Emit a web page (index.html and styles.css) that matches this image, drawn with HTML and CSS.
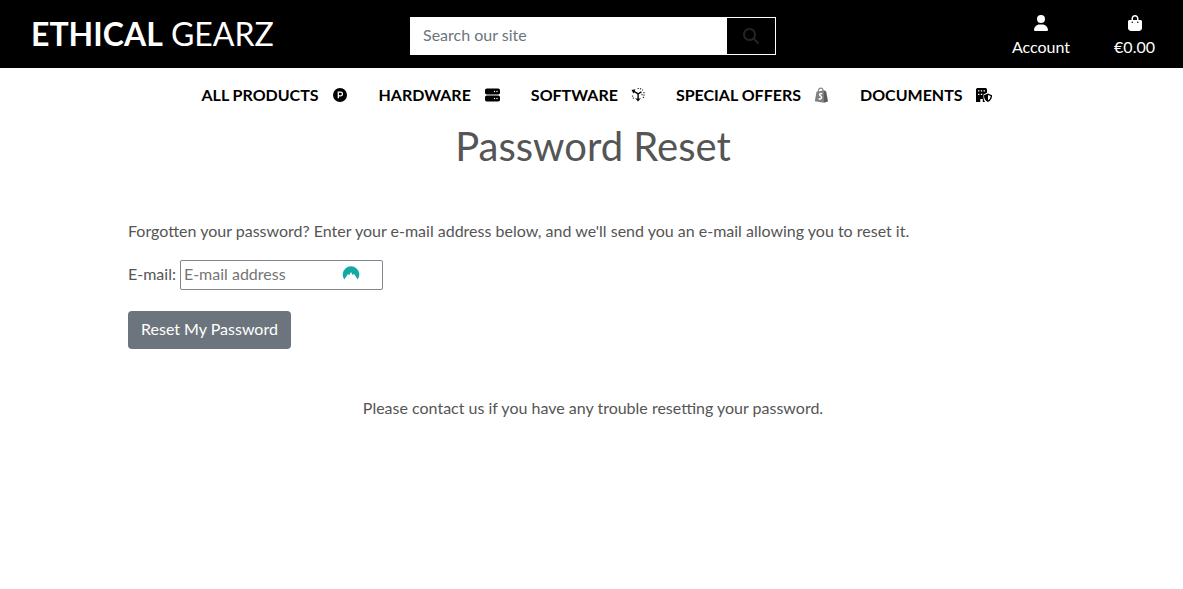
FILE: index.html
```html
<!DOCTYPE html>
<html lang="en">
<head>
<meta charset="utf-8">
<meta name="viewport" content="width=device-width, initial-scale=1">
<title>Password Reset | Ethical Gearz</title>
<link rel="stylesheet" href="styles.css">
</head>
<body>
<header class="top">
  <a class="brand" href="#"><strong>ETHICAL</strong> GEARZ</a>
  <form class="search">
    <input class="search-input" type="text" aria-label="Search our site" placeholder="Search our site">
    <button class="search-button" type="button" aria-label="Search">
      <svg width="16" height="16" viewBox="0 0 512 512" fill="currentColor"><path d="M416 208c0 45.9-14.9 88.3-40 122.7L502.6 457.4c12.5 12.5 12.5 32.8 0 45.3s-32.8 12.5-45.3 0L330.7 376c-34.4 25.2-76.8 40-122.7 40C93.1 416 0 322.9 0 208S93.1 0 208 0S416 93.1 416 208zM208 352a144 144 0 1 0 0-288 144 144 0 1 0 0 288z"/></svg>
    </button>
  </form>
  <div class="account">
    <a class="account-link" href="#">
      <svg width="16" height="16" viewBox="-32 0 512 512" fill="currentColor"><path d="M224 256A128 128 0 1 0 224 0a128 128 0 1 0 0 256zm-45.700 48C79.800 304 0 383.800 0 482.300C0 498.700 13.300 512 29.700 512H418.300c16.400 0 29.700-13.300 29.700-29.700C448 383.800 368.200 304 269.700 304H178.300z"/></svg>
      <span>Account</span>
    </a>
    <a class="account-link" href="#">
      <svg width="16" height="16" viewBox="-32 0 512 512" fill="currentColor"><path d="M160 112c0-35.300 28.700-64 64-64s64 28.700 64 64v48H160V112zm-48 48H48c-26.500 0-48 21.500-48 48V416c0 53 43 96 96 96H352c53 0 96-43 96-96V208c0-26.500-21.500-48-48-48H336V112C336 50.100 285.900 0 224 0S112 50.100 112 112v48zm24 48a24 24 0 1 1 0 48 24 24 0 1 1 0-48zm152 24a24 24 0 1 1 48 0 24 24 0 1 1-48 0z"/></svg>
      <span>€0.00</span>
    </a>
  </div>
</header>
<nav class="nav">
  <a class="nav-link" href="#">ALL PRODUCTS
    <svg width="16" height="16" viewBox="0 0 16 16"><circle cx="8" cy="8" r="7"/><path d="M6.300 11.200v-6h2.400a1.700 1.700 0 0 1 0 3.600H6.300" fill="none" stroke="#fff" stroke-width="1.300"/></svg></a>
  <a class="nav-link" href="#">HARDWARE
    <svg width="16" height="16" viewBox="0 0 16 16"><rect x="1" y="1.500" width="15" height="6" rx="1.800"/><rect x="1" y="8.500" width="15" height="6" rx="1.800"/><g fill="#fff"><circle cx="10.500" cy="4.500" r=".7"/><circle cx="13" cy="4.500" r=".7"/><circle cx="10.500" cy="11.500" r=".7"/><circle cx="13" cy="11.500" r=".7"/></g></svg></a>
  <a class="nav-link" href="#">SOFTWARE
    <svg width="14" height="16" viewBox="0 0 14 16"><path d="M.5 3 4.500 2.200 3.600 4 7.200 6l3-1.700.6 1.100L7.800 7.200v4.600l2.200-.7L7 14.500 4.200 11.100l2.200.7V7.200L3 5.200 2.600 6.800z"/><path d="M1.500 8.500v2l2 1.500M6.500 1.500H9l3 1.600M13 5v5l-2 1.500M11 7v2" fill="none" stroke="#333" stroke-width="1.200" stroke-dasharray="1.300 1.200"/></svg></a>
  <a class="nav-link" href="#">SPECIAL OFFERS
    <svg width="15" height="16" viewBox="0 0 15 16"><path d="M2.500 4.800 10 3.300V15.800L.8 14.300z" fill="#808080"/><path d="m10 3.300 2.200 1.200L14 14.500l-4 1.300z" fill="#5c5c5c"/><path d="M4 5c.3-2.400 1.600-3.800 2.900-3.800S9 2.400 9.300 4" fill="none" stroke="#888" stroke-width="1.200"/><path d="M8.200 6.800c-1.600-.7-2.800 0-2.600 1.100.2 1 2 1 2 2.500s-1.800 2-3 1.200" fill="none" stroke="#fff" stroke-width="1.400"/></svg></a>
  <a class="nav-link" href="#">DOCUMENTS
    <svg width="16" height="16" viewBox="0 0 16 16"><path d="M0 2.500Q0 1 1.500 1h8Q11 1 11 2.500V5.800L7.500 7.500v3.500q.3 2.500 1.500 4H6.800v-3H4.300v3H0z"/><g fill="#fff"><path d="M2 3.300h1.400v1.300H2zM4.800 3.300h1.400v1.300H4.800zM7.600 3.300H9v1.300H7.600zM2 6.800h1.400v1.300H2zM4.800 6.800h1.400v1.300H4.800z"/></g><path d="m12 6.500 4 1.700c.2 3-1.200 5.500-4 6.800-2.800-1.300-4.200-3.800-4-6.800z"/><path d="M12 8v5.500c1.800-1 2.600-2.500 2.600-4.400z" fill="#fff"/></svg></a>
</nav>
<main class="page">
  <h1 class="title">Password Reset</h1>
  <p class="text">Forgotten your password? Enter your e-mail address below, and we'll send you an e-mail allowing you to reset it.</p>
  <form class="reset">
    <div class="field">
      <label for="email">E-mail:</label>
      <div class="email-box">
        <input class="email" id="email" type="email" placeholder="E-mail address">
        <svg class="email-badge" width="18" height="16" viewBox="0 0 18 16"><path d="M2.300 13.500A8.300 8.300 0 1 1 15.700 13.500L12 7.800 10.800 9.300 9 6 7.200 9.300 6 8z" fill="#12a8a5"/></svg>
      </div>
    </div>
    <button class="submit" type="button">Reset My Password</button>
  </form>
  <p class="help">Please contact us if you have any trouble resetting your password.</p>
</main>
</body>
</html>
```

FILE: styles.css
```css
* { box-sizing: border-box; }

body {
  margin: 0;
  background: #fff;
  color: #555;
  font: 16px/24px Lato, sans-serif;
}

.top {
  display: grid;
  grid-template-columns: 1fr 366px 1fr;
  align-items: center;
  padding: 0 28px 0 31px;
  background: #000;
  color: #fff;
}

.brand {
  color: #fff;
  font-size: 32px;
  line-height: 68px;
  text-decoration: none;
  white-space: nowrap;
}

.search {
  display: flex;
  margin-top: 4px;
  border: 1px solid #fff;
}

.search-input {
  flex: 1;
  min-width: 0;
  height: 36px;
  padding: 0 12px 3px;
  border: 0;
  background: #fff;
  color: #555;
  font: inherit;
}

.search-input::placeholder { color: #6c757d; opacity: 1; }

.search-button {
  display: flex;
  align-items: center;
  justify-content: center;
  width: 48px;
  padding: 0;
  border: 0;
  background: #000;
  color: #212529;
}

.account {
  display: flex;
  justify-content: flex-end;
  gap: 44px;
  padding-top: 6px;
}

.account-link {
  display: flex;
  flex-direction: column;
  align-items: center;
  gap: 4px;
  color: #fff;
  text-decoration: none;
}

.nav {
  display: flex;
  justify-content: center;
  gap: 31px;
  padding: 15px 0 0 10px;
}

.nav-link {
  display: flex;
  align-items: center;
  gap: 13px;
  color: #000;
  font-weight: bold;
  text-decoration: none;
  white-space: nowrap;
}

.page { padding: 15px 125px 0 128px; }

.title {
  margin: 0 0 49px;
  font-size: 40px;
  font-weight: 400;
  line-height: 48px;
  text-align: center;
}

.text { margin: 0 0 17px; }

.field {
  display: flex;
  align-items: flex-start;
  gap: 4px;
  margin-bottom: 21px;
}

.field label { padding-top: 2px; }

.email-box { position: relative; }

.email {
  display: block;
  width: 203px;
  height: 30px;
  padding: 0 3px 3px;
  border: 1px solid #85858f;
  border-radius: 2px;
  background: #fff;
  color: #555;
  font: inherit;
}

.email::placeholder { color: #757575; opacity: 1; }

.email-badge {
  position: absolute;
  top: 6px;
  right: 23px;
}

.submit {
  display: block;
  height: 38px;
  padding: 0 13px 2px;
  border: 0;
  border-radius: 4px;
  background: #6c757d;
  color: #fff;
  font: inherit;
}

.help { margin: 47px 0 0; text-align: center; }
```
